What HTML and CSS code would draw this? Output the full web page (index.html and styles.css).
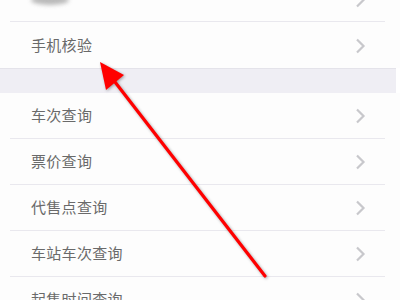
FILE: index.html
```html
<!DOCTYPE html>
<html>
<head>
<meta charset="utf-8">
<link rel="stylesheet" href="styles.css">
</head>
<body>
<div class="screen">
  <div class="list">
    <div class="row row-top">
      <div class="blob"></div>
      <span class="chev chev-top"><svg width="11" height="16" viewBox="0 0 11 16"><path d="M2 1.5 L8.5 8 L2 14.5" fill="none" stroke="#c8c8cc" stroke-width="2.2"/></svg></span>
    </div>
    <div class="row row-last">
      <span class="label">手机核验</span>
      <span class="chev"><svg width="11" height="16" viewBox="0 0 11 16"><path d="M2 1.5 L8.5 8 L2 14.5" fill="none" stroke="#c8c8cc" stroke-width="2.2"/></svg></span>
    </div>
  </div>
  <div class="gap"></div>
  <div class="list">
    <div class="row"><span class="label">车次查询</span><span class="chev"><svg width="11" height="16" viewBox="0 0 11 16"><path d="M2 1.5 L8.5 8 L2 14.5" fill="none" stroke="#c8c8cc" stroke-width="2.2"/></svg></span></div>
    <div class="row"><span class="label">票价查询</span><span class="chev"><svg width="11" height="16" viewBox="0 0 11 16"><path d="M2 1.5 L8.5 8 L2 14.5" fill="none" stroke="#c8c8cc" stroke-width="2.2"/></svg></span></div>
    <div class="row"><span class="label">代售点查询</span><span class="chev"><svg width="11" height="16" viewBox="0 0 11 16"><path d="M2 1.5 L8.5 8 L2 14.5" fill="none" stroke="#c8c8cc" stroke-width="2.2"/></svg></span></div>
    <div class="row"><span class="label">车站车次查询</span><span class="chev"><svg width="11" height="16" viewBox="0 0 11 16"><path d="M2 1.5 L8.5 8 L2 14.5" fill="none" stroke="#c8c8cc" stroke-width="2.2"/></svg></span></div>
    <div class="row"><span class="label">起售时间查询</span><span class="chev"><svg width="11" height="16" viewBox="0 0 11 16"><path d="M2 1.5 L8.5 8 L2 14.5" fill="none" stroke="#c8c8cc" stroke-width="2.2"/></svg></span></div>
  </div>
  <svg class="arrow" width="400" height="300" viewBox="0 0 400 300">
    <g class="arrow-g">
      <line x1="265" y1="276" x2="115" y2="82" stroke="#f00" stroke-width="3.2" stroke-linecap="round"/>
      <polygon points="100,62 124,75 106,90" fill="#f00"/>
    </g>
  </svg>
</div>
</body>
</html>
```
FILE: styles.css
```css
html, body {
  margin: 0;
  padding: 0;
  background: #ffffff;
}
.screen {
  position: relative;
  width: 400px;
  height: 300px;
  overflow: hidden;
  font-family: "Noto Sans CJK SC", "Noto Sans", sans-serif;
}
.list {
  background: #fdfdfd;
}
.row {
  position: relative;
  height: 45px;
  margin-left: 10px;
  margin-right: 15px;
  border-bottom: 1px solid #e9e8ee;
  display: flex;
  align-items: center;
  justify-content: space-between;
  padding-left: 21px;
  padding-right: 19px;
}
.row-top {
  height: 21px;
  align-items: flex-start;
}
.row-last {
  height: 46px;
  border-bottom: none;
}
.label {
  font-size: 15px;
  color: #6a6a6a;
  letter-spacing: 0.3px;
  margin-top: -2px;
}
.chev {
  display: flex;
  padding-top: 1px;
}
.chev-top {
  margin-top: -9px;
}
.blob {
  width: 38px;
  height: 10px;
  margin-top: -5px;
  border-radius: 50%;
  background: #a9a9a9;
  filter: blur(2px);
  opacity: 0.8;
}
.gap {
  height: 24px;
  background: #efeef4;
  border-top: 1px solid #e4e3ea;
  margin-right: 4px;
}
.arrow {
  position: absolute;
  left: 0;
  top: 0;
}
.arrow-g {
  filter: drop-shadow(1px 1px 1.5px rgba(0,0,0,0.35));
}
```
